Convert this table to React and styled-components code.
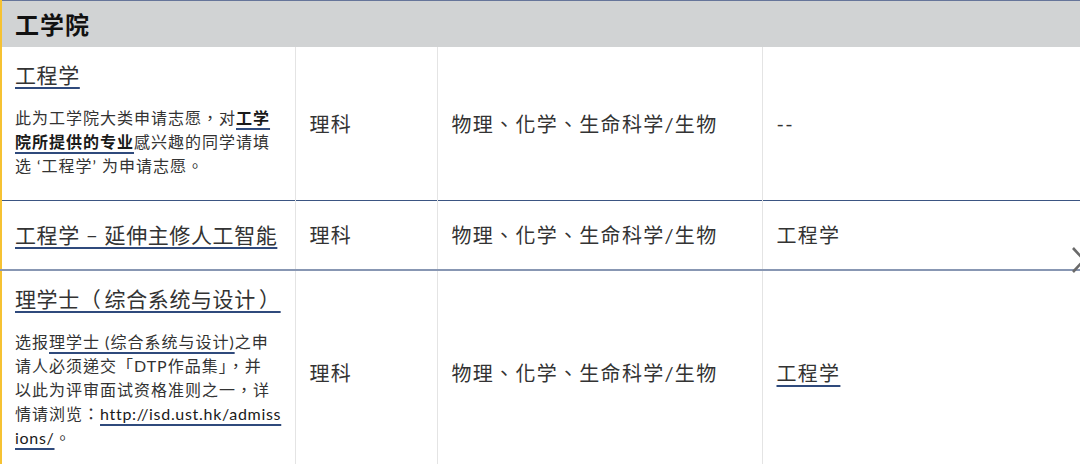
import styled, { createGlobalStyle } from 'styled-components'

const GlobalStyle = createGlobalStyle`
  html, body {
    margin: 0;
    padding: 0;
    background: #fff;
    overflow: hidden;
  }
  body {
    font-family: Lato, "Noto Sans CJK TC", sans-serif;
    color: #333;
  }
`

const Wrapper = styled.div`
  position: relative;
  width: 1080px;
  height: 464px;
  overflow: hidden;
`

const Table = styled.table`
  width: 1082px;
  table-layout: fixed;
  border-collapse: collapse;
  border-top: 1px solid #66759a;
  border-left: 2px solid #f6c232;
`

const SchoolHead = styled.th`
  height: 44px;
  padding: 0 13px 2px;
  background: #d1d3d4;
  text-align: left;
  font-size: 24px;
  font-weight: 700;
  letter-spacing: 1px;
  color: #111;
  border-top: 1px solid #66759a;
`

const Row = styled.tr`
  height: ${({ $h }) => $h}px;
  border-bottom: ${({ $light }) => ($light ? '2px solid #8897b3' : '1px solid #3b5582')};
`

const Cell = styled.td`
  padding: 0 14px;
  vertical-align: middle;
  font-size: 20px;
  letter-spacing: 1.3px;
  color: #333;
  border-left: 1px solid #e4e4e4;
`

const NameCell = styled.td`
  padding: ${({ $middle }) => ($middle ? '0 12px 0 13px' : '13px 12px 0 13px')};
  vertical-align: ${({ $middle }) => ($middle ? 'middle' : 'top')};
`

const Title = styled.div`
  font-size: 21px;
  letter-spacing: 0.6px;
  line-height: 30px;
  color: #333;
  white-space: nowrap;
`

const Desc = styled.p`
  margin: 16px 0 0;
  font-size: 16px;
  letter-spacing: 1px;
  line-height: 24px;
  color: #333;
  white-space: nowrap;
`

const Link = styled.span`
  text-decoration: underline;
  text-decoration-color: #2f4a7c;
  text-decoration-thickness: 2px;
  text-underline-offset: 4px;
  font-weight: ${({ $bold }) => ($bold ? 700 : 'inherit')};
  color: ${({ $bold, $dark }) => ($bold || $dark ? '#1a1a1a' : 'inherit')};
  letter-spacing: ${({ $dark }) => ($dark ? '0.7px' : 'inherit')};
`

const NextArrow = styled.div`
  position: absolute;
  right: -6px;
  top: 246px;
  display: flex;
`

const programmes = [
  {
    name: '工程学',
    desc: (
      <>
        此为工学院大类申请志愿，对<Link $bold>工学</Link>
        <br />
        <Link $bold>院所提供的专业</Link>感兴趣的同学请填
        <br />
        选 ‘工程学’ 为申请志愿。
      </>
    ),
    stream: '理科',
    subjects: '物理、化学、生命科学/生物',
    related: '--',
    h: 153,
  },
  {
    name: '工程学 – 延伸主修人工智能',
    stream: '理科',
    subjects: '物理、化学、生命科学/生物',
    related: '工程学',
    h: 70,
    middle: true,
    light: true,
  },
  {
    name: '理学士（\u2009综合系统与设计\u2009）',
    desc: (
      <>
        选报<Link>理学士 (综合系统与设计)</Link>之申
        <br />
        请人必须递交「DTP作品集」，并
        <br />
        以此为评审面试资格准则之一，详
        <br />
        情请浏览：<Link $dark>http://isd.ust.hk/admiss</Link>
        <br />
        <Link $dark>ions/</Link>。
      </>
    ),
    stream: '理科',
    subjects: '物理、化学、生命科学/生物',
    related: '工程学',
    relatedLink: true,
    h: 204,
  },
]

function App() {
  return (
    <>
      <GlobalStyle />
      <Wrapper>
        <Table>
          <colgroup>
            <col style={{ width: 294 }} />
            <col style={{ width: 142 }} />
            <col style={{ width: 325 }} />
            <col style={{ width: 321 }} />
          </colgroup>
          <thead>
            <tr>
              <SchoolHead colSpan={4}>工学院</SchoolHead>
            </tr>
          </thead>
          <tbody>
            {programmes.map((p) => (
              <Row key={p.name} $h={p.h} $light={p.light}>
                <NameCell $middle={p.middle}>
                  <Title>
                    <Link>{p.name}</Link>
                  </Title>
                  {p.desc && <Desc>{p.desc}</Desc>}
                </NameCell>
                <Cell>{p.stream}</Cell>
                <Cell>{p.subjects}</Cell>
                <Cell>{p.relatedLink ? <Link>{p.related}</Link> : p.related}</Cell>
              </Row>
            ))}
          </tbody>
        </Table>
        <NextArrow>
          <svg width="14" height="30" viewBox="0 0 14 30">
            <path d="M1 2 L12 14 L1 26" fill="none" stroke="#6a6a6a" strokeWidth="2.6" />
          </svg>
        </NextArrow>
      </Wrapper>
    </>
  )
}

export default App
